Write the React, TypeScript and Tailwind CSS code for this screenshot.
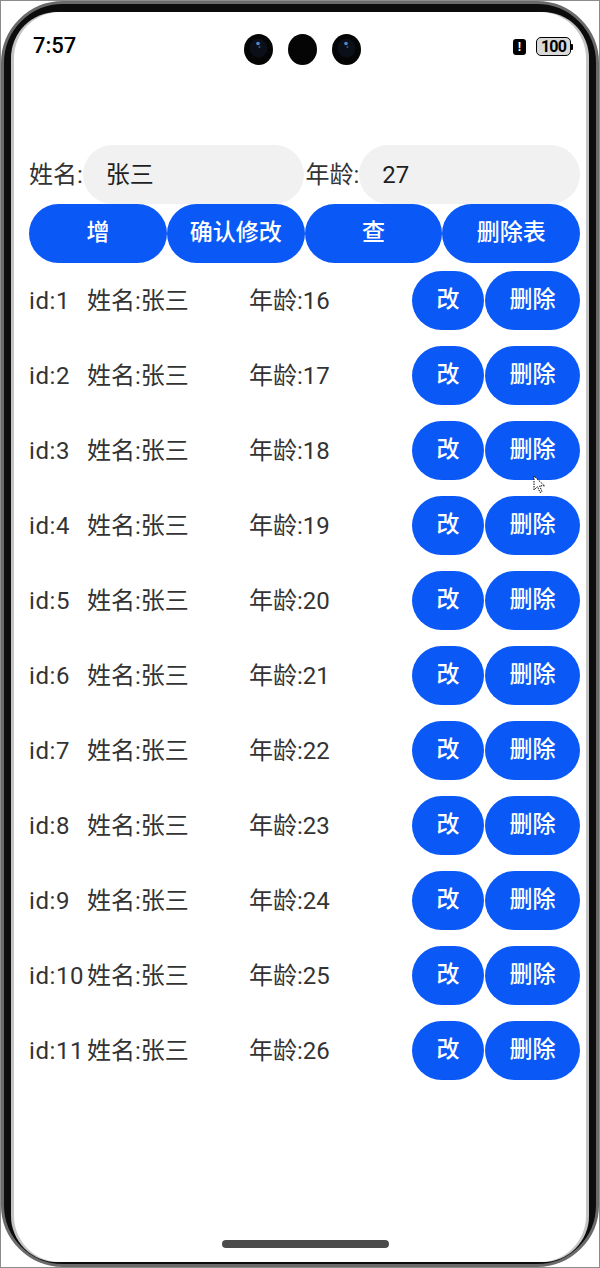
import React from 'react';

const ROWS = Array.from({ length: 11 }, (_, i) => ({ id: i + 1, name: '张三', age: 16 + i }));

const FONT = "font-['Roboto','Noto_Sans_CJK_SC',sans-serif]";

function Lens({ glint }: { glint?: boolean }) {
  return (
    <svg width="29" height="31" viewBox="0 0 29 31">
      <ellipse cx="14.5" cy="15.5" rx="14.5" ry="15.5" fill="#050505" />
      {glint && (
        <>
          <ellipse cx="14.5" cy="14" rx="9" ry="9.5" fill="#0a0f18" />
          <circle cx="14" cy="9.5" r="1.8" fill="#4b8ad6" />
          <circle cx="15.5" cy="13" r="1" fill="#2d5f99" />
        </>
      )}
    </svg>
  );
}

function StatusBar() {
  return (
    <div className="grid grid-cols-[1fr_auto_1fr] items-start h-[74px] pt-[22px] px-[13px]">
      <div className={`pl-[6px] pt-[1px] text-[22px] leading-[22px] font-medium text-black ${FONT}`}>7:57</div>
      <div className="flex gap-[15px] ml-[5px]">
        <Lens glint />
        <Lens />
        <Lens glint />
      </div>
      <div className="flex justify-end items-center gap-[10px] pt-[3px]">
        <div className="w-[13px] h-[16px] rounded-[3px] bg-black flex items-center justify-center">
          <span className="text-white text-[12px] leading-none font-bold font-['Liberation_Sans',sans-serif]">!</span>
        </div>
        <div className="flex items-center">
          <div className="w-[35px] h-[19px] rounded-[5px] border-[1.5px] border-black bg-[#d9d9d9] flex items-center justify-center">
            <span className="text-[16px] leading-none font-bold text-black font-['Roboto',sans-serif] tracking-[-0.8px]">100</span>
          </div>
          <div className="w-[2px] h-[6px] bg-black rounded-r-[1px]" />
        </div>
      </div>
    </div>
  );
}

function Field({ label, value }: { label: string; value: string }) {
  return (
    <div className="flex items-center flex-1">
      <span className="text-[24px] text-[#333] whitespace-nowrap">{label}</span>
      <div className="flex-1 h-[59px] rounded-full bg-[#f1f1f1] flex items-center pl-[23px] text-[24px] text-[#1f1f1f]">
        {value}
      </div>
    </div>
  );
}

function BlueBtn({ children, className }: { children: React.ReactNode; className?: string }) {
  return (
    <button className={`h-[59px] rounded-full bg-[#0a59f7] text-white text-[23px] font-medium flex items-center justify-center ${className ?? ''}`}>
      {children}
    </button>
  );
}

export default function App() {
  return (
    <div className={`w-[600px] h-[1268px] bg-white border border-[#8c8c8c] relative overflow-hidden ${FONT}`}>
      {/* phone bezel */}
      <div className="h-full rounded-[62px] bg-[#0c0c0c] border-[3px] border-[#6a6a6a] pt-[8px] px-[10px] pb-[2px]">
        {/* screen */}
        <div className="h-full rounded-[46px] bg-white flex flex-col overflow-hidden shadow-[-3px_0_0_#c4c4c4,3px_0_0_#c4c4c4]">
          <StatusBar />

          <div className="pl-[15px] pr-[6px] mt-[59px] flex flex-col">
            <div className="flex gap-[2px]">
              <Field label="姓名:" value="张三" />
              <Field label="年龄:" value="27" />
            </div>

            <div className="grid grid-cols-4">
              <BlueBtn>增</BlueBtn>
              <BlueBtn>确认修改</BlueBtn>
              <BlueBtn>查</BlueBtn>
              <BlueBtn>删除表</BlueBtn>
            </div>

            <div className="flex flex-col">
              {ROWS.map(r => (
                <div key={r.id} className="h-[75px] flex items-center text-[24px] text-[#333]">
                  <span className="w-[58px] whitespace-nowrap tracking-[0.6px]">id:{r.id}</span>
                  <span className="w-[162px] whitespace-nowrap">姓名:{r.name}</span>
                  <span className="flex-1 whitespace-nowrap">年龄:{r.age}</span>
                  <BlueBtn className="w-[72px]">改</BlueBtn>
                  <BlueBtn className="w-[95px] ml-px">删除</BlueBtn>
                </div>
              ))}
            </div>
          </div>

          <div className="mt-auto mb-[14px] flex justify-center">
            <div className="w-[167px] h-[8px] rounded-full bg-[#4b4b4b] ml-[10px]" />
          </div>
        </div>
      </div>

      {/* mouse pointer */}
      <svg className="absolute left-[532px] top-[474px]" width="14" height="20" viewBox="0 0 14 20">
        <path d="M1 1 L1 15 L4.5 11.5 L7 17.5 L9 16.6 L6.6 10.8 L11.5 10.8 Z" fill="#fff" stroke="#000" strokeWidth="1" strokeDasharray="1.5 1" />
      </svg>
    </div>
  );
}
